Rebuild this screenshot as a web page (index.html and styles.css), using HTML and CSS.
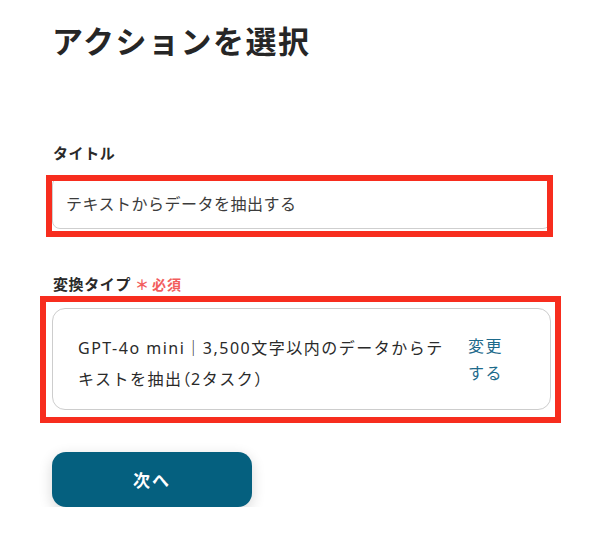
FILE: index.html
```html
<!DOCTYPE html>
<html lang="ja">
<head>
<meta charset="utf-8">
<title>アクションを選択</title>
<link rel="stylesheet" href="styles.css">
</head>
<body>
<main class="page">
  <h1 class="heading">アクションを選択</h1>

  <section class="field field-title">
    <div class="label">タイトル</div>
    <div class="annotated">
      <div class="input">テキストからデータを抽出する</div>
      <div class="mark mark-title"></div>
    </div>
  </section>

  <section class="field field-type">
    <div class="label">変換タイプ<span class="required"><span class="ast">＊</span>必須</span></div>
    <div class="annotated">
      <div class="card">
        <div class="card-text">GPT-4o mini｜3,500文字以内のデータからテキストを抽出<span class="paren">（</span>2タスク<span class="paren">）</span></div>
        <a class="change">変更する</a>
      </div>
      <div class="mark mark-card"></div>
    </div>
  </section>

  <button class="next" type="button">次へ</button>
</main>
</body>
</html>
```

FILE: styles.css
```css
html, body {
  margin: 0;
  padding: 0;
  background: #ffffff;
}

body {
  font-family: "Noto Sans", "Noto Sans CJK JP", sans-serif;
  color: #2b2b2b;
}

.page {
  padding: 15px 0 0 52px;
  width: 499px;
}

.heading {
  margin: 0;
  font-family: "Noto Sans CJK JP", sans-serif;
  font-size: 31px;
  line-height: 50px;
  font-weight: 700;
  letter-spacing: 1.5px;
  color: #262626;
}

.field-title {
  margin-top: 76px;
}

.field-type {
  margin-top: 43px;
}

.label {
  font-family: "Noto Sans CJK JP", sans-serif;
  font-size: 15px;
  font-weight: 700;
  line-height: 24px;
  letter-spacing: 0.6px;
  color: #2a2a2a;
  margin-bottom: 12px;
  padding-left: 1px;
  display: flex;
  align-items: center;
}

.required {
  color: #f25d5d;
  font-size: 14px;
  margin-left: 4px;
  letter-spacing: 1px;
  display: inline-flex;
  align-items: center;
}

.ast {
  font-size: 14px;
  margin-right: 2px;
}

.annotated {
  position: relative;
}

.input {
  height: 52px;
  box-sizing: border-box;
  border: 1px solid #cfcfcf;
  border-radius: 8px;
  padding: 0 13px;
  display: flex;
  align-items: center;
  font-size: 16px;
  letter-spacing: 0.5px;
  color: #3c3c3c;
}

.mark {
  position: absolute;
  border: 6px solid #f72d1e;
  pointer-events: none;
}

.mark-title {
  top: -2px;
  bottom: -8px;
  left: -6px;
  right: -2px;
}

.mark-card {
  top: -12px;
  bottom: -13px;
  left: -12px;
  right: -10px;
}

.card {
  box-sizing: border-box;
  height: 102px;
  border: 1px solid #cdcdcd;
  border-radius: 13px;
  padding: 24px 46px 16px 25px;
  display: flex;
  gap: 14px;
  align-items: flex-start;
}

.card-text {
  width: 376px;
  font-size: 16px;
  line-height: 30px;
  letter-spacing: 1.5px;
  color: #2a2a2a;
}

.paren {
  font-family: "Noto Sans CJK JP", sans-serif;
  font-feature-settings: "halt";
  letter-spacing: 0.5px;
}

.change {
  width: 36px;
  font-size: 16px;
  line-height: 27px;
  letter-spacing: 1.5px;
  color: #1d6a8b;
  cursor: pointer;
}

.next {
  margin-top: 42px;
  width: 200px;
  height: 55px;
  border: none;
  border-radius: 14px;
  background: #05607f;
  color: #ffffff;
  font-family: "Noto Sans CJK JP", sans-serif;
  font-size: 17px;
  font-weight: 700;
  letter-spacing: 2px;
  box-shadow: 0 4px 14px rgba(0, 0, 0, 0.16);
  cursor: pointer;
}
```
